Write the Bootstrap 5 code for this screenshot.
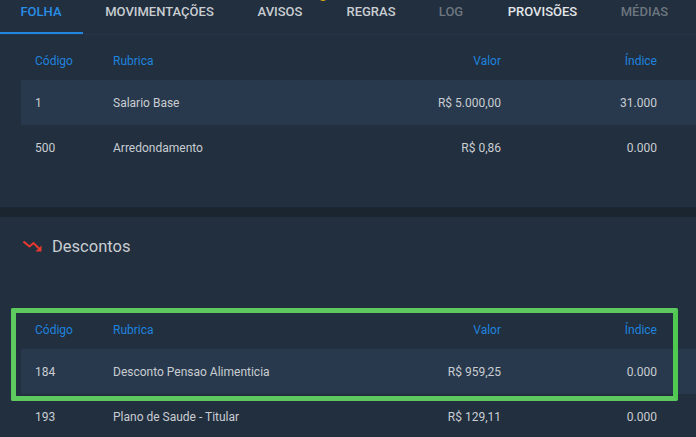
<!DOCTYPE html>
<html lang="pt-BR">
<head>
<meta charset="utf-8">
<title>Folha</title>
<link href="https://cdn.jsdelivr.net/npm/bootstrap@5.3.0/dist/css/bootstrap.min.css" rel="stylesheet">
<style>
html,body{height:437px;overflow:hidden}
body{background:#212f3f;font-family:Roboto,"Liberation Sans",sans-serif;color:#c9cdd1;font-size:12px}
.tab-strip{height:35px;flex-wrap:nowrap;border-bottom:1px solid #25344a;position:relative}
.tab-strip .nav-link{font-size:13px;font-weight:500;color:#c9cdd1;height:34px;line-height:24px;padding:0;text-align:center;white-space:nowrap;border-bottom:2px solid transparent;flex:none}
.tab-strip .nav-link.active{color:#2a8de6;border-bottom-color:#2186e0;padding-right:1px}
.tab-strip .nav-link.disabled{color:#6d767f}
.tab-strip .nav-link.bright{color:#e3e5e8}
.t1{width:83px}.t2{width:153px}.t3{width:88px}.t4{width:94px}.t5{width:66px}.t6{width:117px}.t7{width:87px}
.tip-dot{position:absolute;left:320px;top:-3px;width:6px;height:4px;border-radius:50%;background:#d9a514}
.data-wrap{margin-left:21px;width:675px}
.top-wrap{margin-top:5px}
.data-table{table-layout:fixed;width:675px;margin:0;--bs-table-bg:transparent;--bs-table-color:#c9cdd1;--bs-table-border-color:transparent;color:#c9cdd1}
.data-table th,.data-table td{padding:0 14px;vertical-align:middle;border:0;font-size:12px;font-weight:400;background:transparent;color:#c9cdd1;box-shadow:none}
.data-table thead th{height:40px;padding-top:2px;color:#2083de}
.data-table tbody td{height:45px}
.data-table tr.striped td{background:#28394d}
.data-table .c1{width:78px}.data-table .c2{width:250px}.data-table .c3{width:166px}.data-table .c4{width:181px;padding-right:39px}
.gap-block{height:37px}
.divider{height:10px;background:#1a2530;border-top:1px solid #1c2833}
.section-title{height:60px;padding-left:23px;gap:10px;font-size:16.5px;color:#c9cdd1}
.section-title svg{flex:none;margin-top:-1px}
.discount-wrap{position:relative;margin-top:32px}
.highlight{position:absolute;left:-10px;top:-1px;width:667px;height:93px;border:5px solid #5ec95e;border-right-color:#4fc94f;border-radius:2px;pointer-events:none}
</style>
</head>
<body>
<ul class="nav tab-strip">
  <li class="nav-item"><a class="nav-link active t1" href="#">FOLHA</a></li>
  <li class="nav-item"><a class="nav-link t2" href="#">MOVIMENTAÇÕES</a></li>
  <li class="nav-item"><a class="nav-link t3" href="#">AVISOS</a></li>
  <li class="nav-item"><a class="nav-link t4" href="#">REGRAS</a></li>
  <li class="nav-item"><a class="nav-link disabled t5" href="#">LOG</a></li>
  <li class="nav-item"><a class="nav-link bright t6" href="#">PROVISÕES</a></li>
  <li class="nav-item"><a class="nav-link disabled t7" href="#">MÉDIAS</a></li>
  <li class="tip-dot"></li>
</ul>
<div class="data-wrap top-wrap">
  <table class="table data-table">
    <thead><tr><th class="c1">Código</th><th class="c2">Rubrica</th><th class="c3 text-end">Valor</th><th class="c4 text-end">Índice</th></tr></thead>
    <tbody>
      <tr class="striped"><td class="c1">1</td><td class="c2">Salario Base</td><td class="c3 text-end">R$ 5.000,00</td><td class="c4 text-end">31.000</td></tr>
      <tr><td class="c1">500</td><td class="c2">Arredondamento</td><td class="c3 text-end">R$ 0,86</td><td class="c4 text-end">0.000</td></tr>
    </tbody>
  </table>
</div>
<div class="gap-block"></div>
<div class="divider"></div>
<div class="section-title d-flex align-items-center">
  <svg width="19" height="13" viewBox="0 0 19 13" aria-hidden="true"><path d="M0.5 1.5 L6.5 6.5 L10.5 3 L16 8.5" fill="none" stroke="#e8392f" stroke-width="2"/><path d="M18.5 5.5 V11.5 H12.5 Z" fill="#e8392f"/></svg>
  <span>Descontos</span>
</div>
<div class="data-wrap discount-wrap">
  <table class="table data-table">
    <thead><tr><th class="c1">Código</th><th class="c2">Rubrica</th><th class="c3 text-end">Valor</th><th class="c4 text-end">Índice</th></tr></thead>
    <tbody>
      <tr class="striped"><td class="c1">184</td><td class="c2">Desconto Pensao Alimenticia</td><td class="c3 text-end">R$ 959,25</td><td class="c4 text-end">0.000</td></tr>
      <tr><td class="c1">193</td><td class="c2">Plano de Saude - Titular</td><td class="c3 text-end">R$ 129,11</td><td class="c4 text-end">0.000</td></tr>
    </tbody>
  </table>
  <div class="highlight"></div>
</div>
<script src="https://cdn.jsdelivr.net/npm/bootstrap@5.3.0/dist/js/bootstrap.bundle.min.js"></script>
</body>
</html>
